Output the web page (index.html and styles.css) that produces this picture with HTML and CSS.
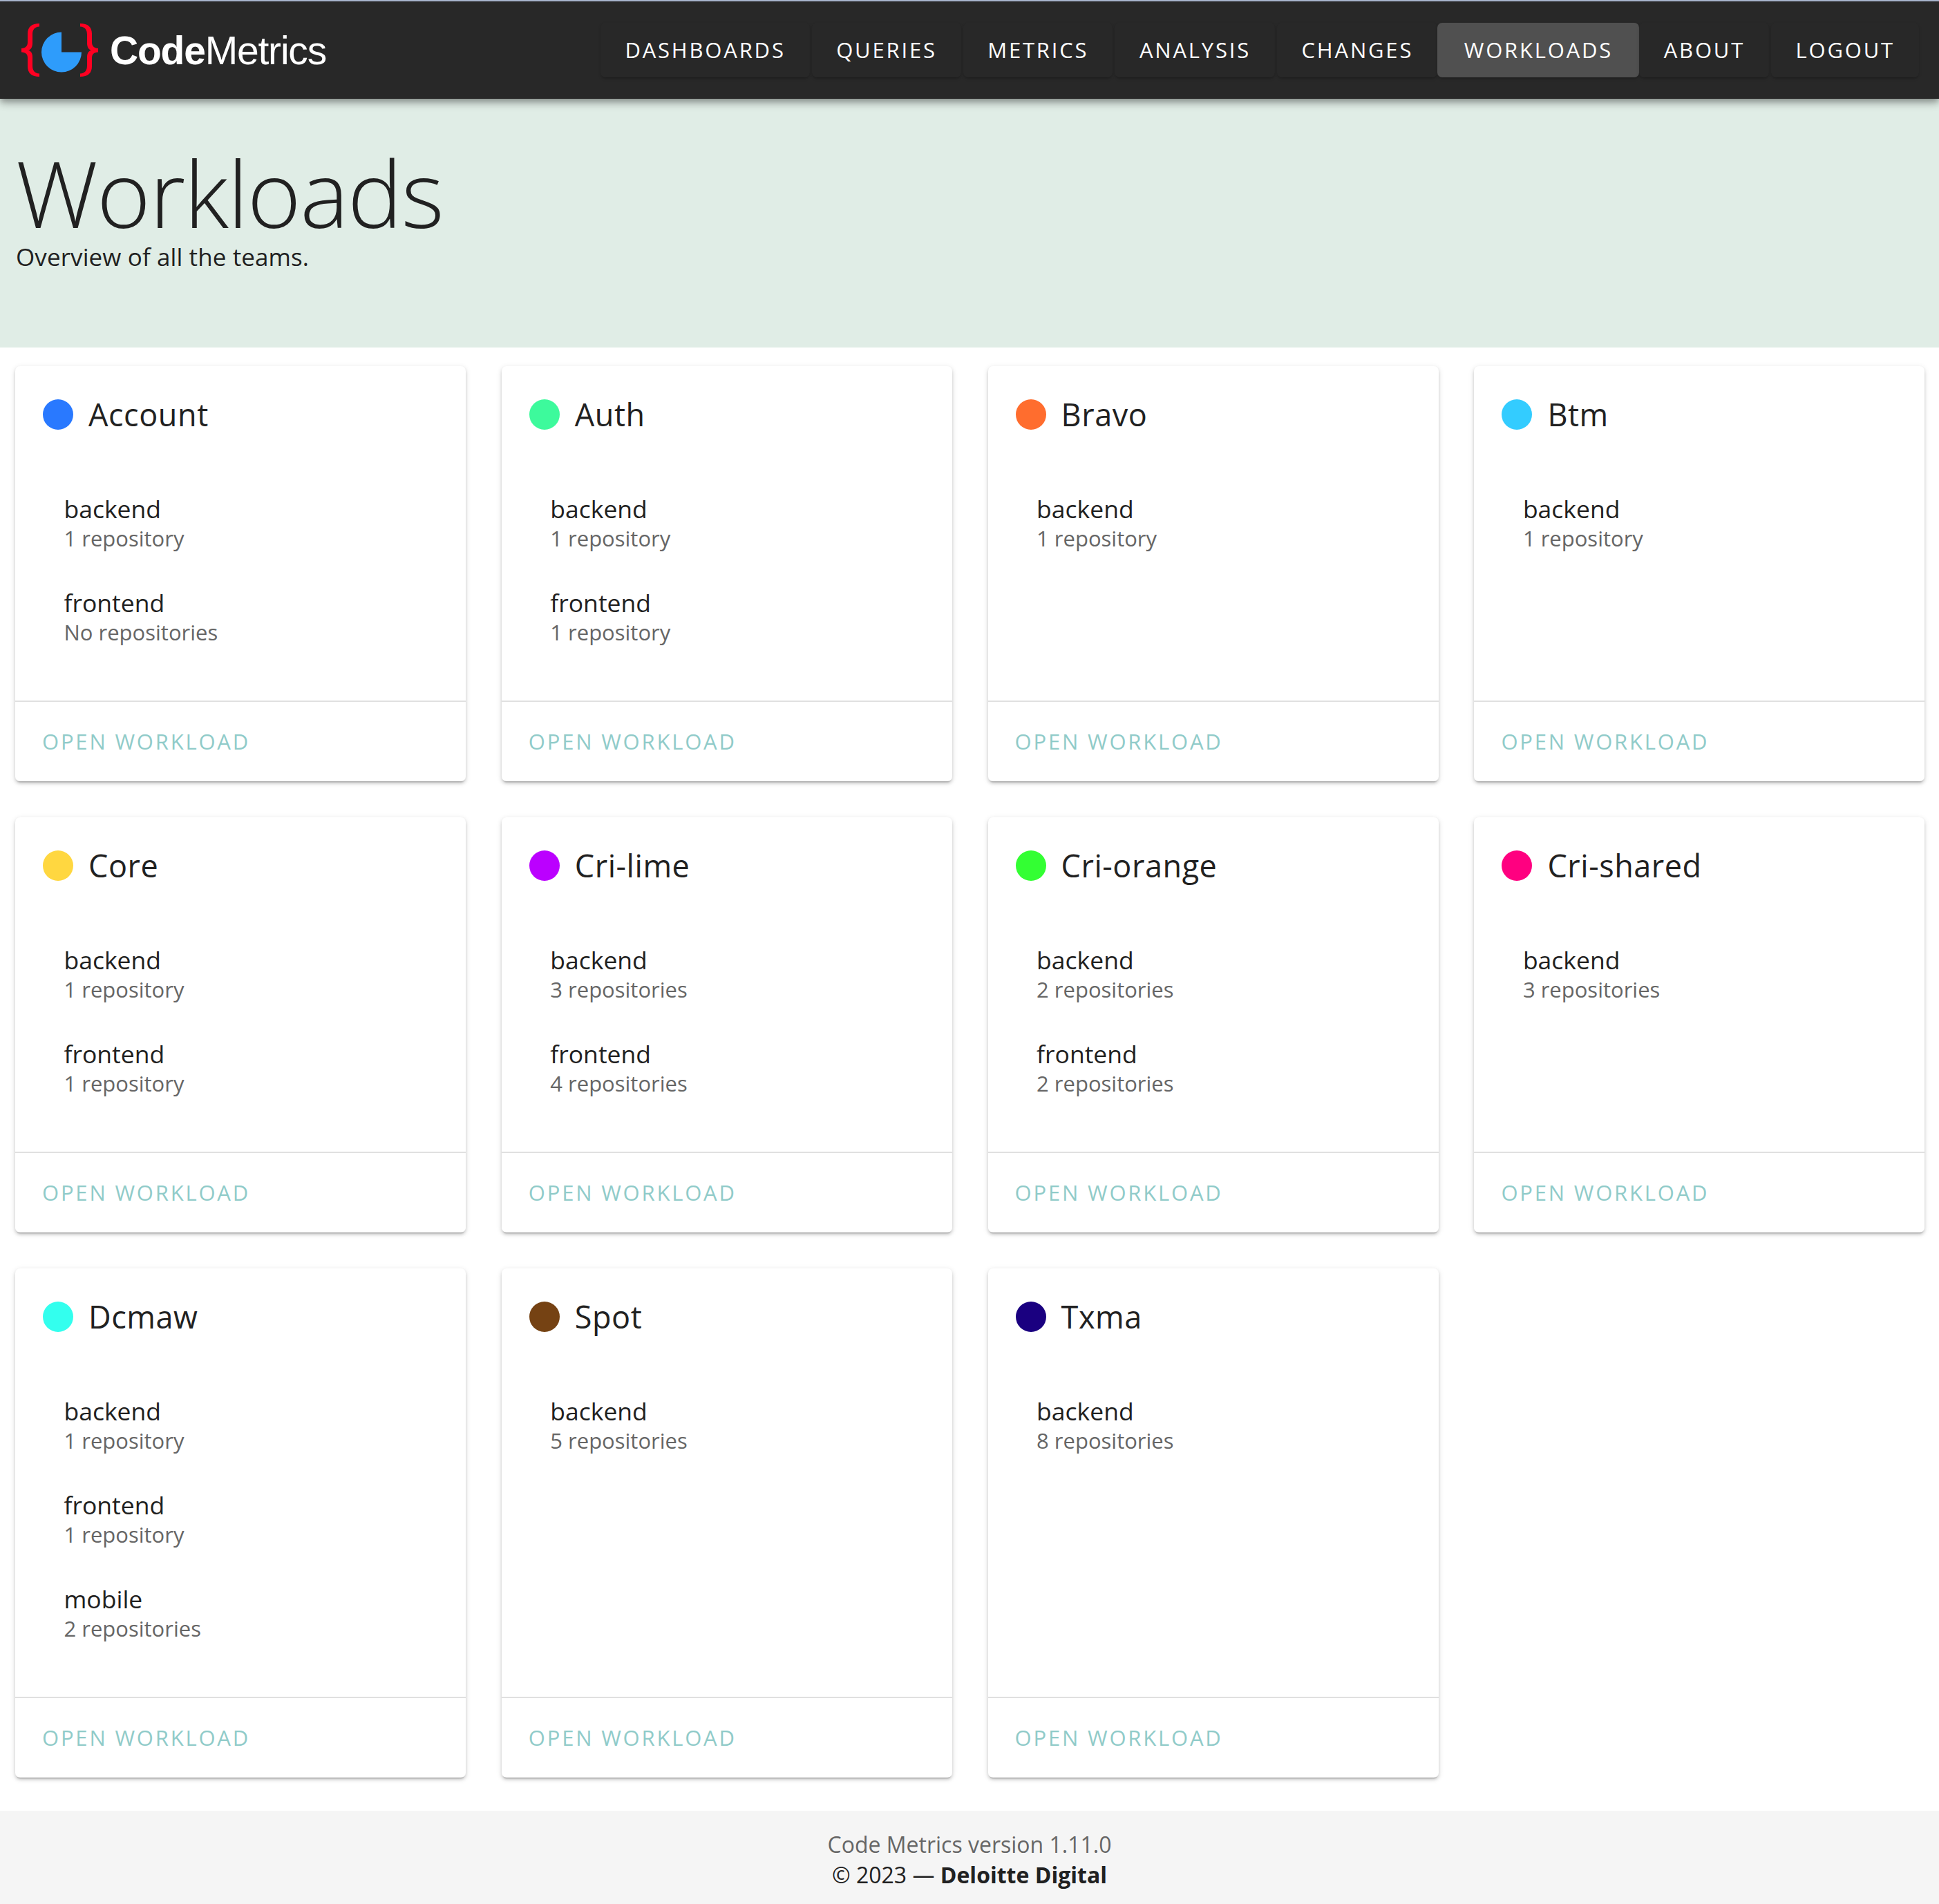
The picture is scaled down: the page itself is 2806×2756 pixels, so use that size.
FILE: index.html
```html
<!DOCTYPE html>
<html>
  <head>
    <meta charset="UTF-8">
    <link rel="stylesheet" href="styles.css">
    <title>Workloads</title>
  </head>
  <body>
    <header class="topbar">
      <a class="logo">
        <svg class="logo-mark" viewBox="31 33 111 77" width="111" height="77">
          <path fill="#ff0022" d="M57 33C46 33 40 38 40 48V60C40 66 37 68.5 31 69V74.5C37 75 40 77 40 83V95C40 105 46 110 57 110V105.5C50 105 47 101 47 94V82C47 76 45 73 41 71.8C45 70.5 47 67 47 61V49C47 42 50 38 57 37.5Z"/>
          <path fill="#ff0022" d="M116 33C127 33 133 38 133 48V60C133 66 136 68.5 142 69V74.5C136 75 133 77 133 83V95C133 105 127 110 116 110V105.5C123 105 126 101 126 94V82C126 76 128 73 132 71.8C128 70.5 126 67 126 61V49C126 42 123 38 116 37.5Z"/>
          <path fill="#2e9cfb" d="M89 74.5V45.5A29 29 0 1 0 118 74.5Z"/>
        </svg>
        <span class="logo-text"><b>Code</b>Metrics</span>
      </a>
      <nav class="nav">
        <a class="nav-btn">Dashboards</a>
        <a class="nav-btn">Queries</a>
        <a class="nav-btn">Metrics</a>
        <a class="nav-btn">Analysis</a>
        <a class="nav-btn">Changes</a>
        <a class="nav-btn active">Workloads</a>
        <a class="nav-btn">About</a>
        <a class="nav-btn">Logout</a>
      </nav>
    </header>

    <section class="hero">
      <h1>Workloads</h1>
      <p>Overview of all the teams.</p>
    </section>

    <main class="cards">
      <div class="card">
        <div class="card-head"><span class="dot dot-account"></span><h2>Account</h2></div>
        <ul class="groups">
          <li><span class="group-name">backend</span><span class="group-count">1 repository</span></li>
          <li><span class="group-name">frontend</span><span class="group-count">No repositories</span></li>
        </ul>
        <div class="card-actions"><a>Open workload</a></div>
      </div>
      <div class="card">
        <div class="card-head"><span class="dot dot-auth"></span><h2>Auth</h2></div>
        <ul class="groups">
          <li><span class="group-name">backend</span><span class="group-count">1 repository</span></li>
          <li><span class="group-name">frontend</span><span class="group-count">1 repository</span></li>
        </ul>
        <div class="card-actions"><a>Open workload</a></div>
      </div>
      <div class="card">
        <div class="card-head"><span class="dot dot-bravo"></span><h2>Bravo</h2></div>
        <ul class="groups">
          <li><span class="group-name">backend</span><span class="group-count">1 repository</span></li>
        </ul>
        <div class="card-actions"><a>Open workload</a></div>
      </div>
      <div class="card">
        <div class="card-head"><span class="dot dot-btm"></span><h2>Btm</h2></div>
        <ul class="groups">
          <li><span class="group-name">backend</span><span class="group-count">1 repository</span></li>
        </ul>
        <div class="card-actions"><a>Open workload</a></div>
      </div>
      <div class="card">
        <div class="card-head"><span class="dot dot-core"></span><h2>Core</h2></div>
        <ul class="groups">
          <li><span class="group-name">backend</span><span class="group-count">1 repository</span></li>
          <li><span class="group-name">frontend</span><span class="group-count">1 repository</span></li>
        </ul>
        <div class="card-actions"><a>Open workload</a></div>
      </div>
      <div class="card">
        <div class="card-head"><span class="dot dot-lime"></span><h2>Cri-lime</h2></div>
        <ul class="groups">
          <li><span class="group-name">backend</span><span class="group-count">3 repositories</span></li>
          <li><span class="group-name">frontend</span><span class="group-count">4 repositories</span></li>
        </ul>
        <div class="card-actions"><a>Open workload</a></div>
      </div>
      <div class="card">
        <div class="card-head"><span class="dot dot-orange"></span><h2>Cri-orange</h2></div>
        <ul class="groups">
          <li><span class="group-name">backend</span><span class="group-count">2 repositories</span></li>
          <li><span class="group-name">frontend</span><span class="group-count">2 repositories</span></li>
        </ul>
        <div class="card-actions"><a>Open workload</a></div>
      </div>
      <div class="card">
        <div class="card-head"><span class="dot dot-shared"></span><h2>Cri-shared</h2></div>
        <ul class="groups">
          <li><span class="group-name">backend</span><span class="group-count">3 repositories</span></li>
        </ul>
        <div class="card-actions"><a>Open workload</a></div>
      </div>
      <div class="card">
        <div class="card-head"><span class="dot dot-dcmaw"></span><h2>Dcmaw</h2></div>
        <ul class="groups">
          <li><span class="group-name">backend</span><span class="group-count">1 repository</span></li>
          <li><span class="group-name">frontend</span><span class="group-count">1 repository</span></li>
          <li><span class="group-name">mobile</span><span class="group-count">2 repositories</span></li>
        </ul>
        <div class="card-actions"><a>Open workload</a></div>
      </div>
      <div class="card">
        <div class="card-head"><span class="dot dot-spot"></span><h2>Spot</h2></div>
        <ul class="groups">
          <li><span class="group-name">backend</span><span class="group-count">5 repositories</span></li>
        </ul>
        <div class="card-actions"><a>Open workload</a></div>
      </div>
      <div class="card">
        <div class="card-head"><span class="dot dot-txma"></span><h2>Txma</h2></div>
        <ul class="groups">
          <li><span class="group-name">backend</span><span class="group-count">8 repositories</span></li>
        </ul>
        <div class="card-actions"><a>Open workload</a></div>
      </div>
    </main>

    <footer class="footer">
      <div class="version">Code Metrics version 1.11.0</div>
      <div class="copyright">© 2023 — <b>Deloitte Digital</b></div>
    </footer>
  </body>
</html>
```
FILE: styles.css
```css
body {
    margin: 0;
    background: #fff;
    color: #212121;
    font-family: "Open Sans", sans-serif;
}

.topbar {
    display: flex;
    align-items: center;
    height: 141px;
    padding: 0 29px 0 31px;
    background: #282828;
    border-top: 2px solid #a7b3cc;
    box-shadow: 0 4px 8px -1px rgba(0, 0, 0, .25), 0 8px 10px rgba(0, 0, 0, .14), 0 2px 18px rgba(0, 0, 0, .12);
    position: relative;
}

.logo {
    display: flex;
    align-items: center;
}

.logo-text {
    margin-left: 17px;
    font-family: "Liberation Sans", sans-serif;
    font-size: 57px;
    letter-spacing: -1.2px;
    color: #fff;
}

.nav {
    display: flex;
    gap: 3px;
    margin-left: auto;
}

.nav-btn {
    padding: 0 35px 0 35.5px;
    height: 79px;
    line-height: 78px;
    border-radius: 7px;
    background: #282828;
    box-shadow: 0 3px 2px -2px rgba(0, 0, 0, .2), 0 2px 4px rgba(0, 0, 0, .14);
    color: #fff;
    font-size: 31px;
    letter-spacing: 2.8px;
    text-transform: uppercase;
}

.nav-btn.active {
    margin: 0 -3px;
    padding: 0 38px 0 38.5px;
    background: #505050;
}

.hero {
    height: 291px;
    padding: 69px 0 0 23px;
    background: #e0ede6;
}

.hero h1 {
    margin: 0;
    font-size: 133px;
    font-weight: 300;
    line-height: 133px;
    letter-spacing: -1.6px;
}

.hero p {
    margin: 3px 0 0;
    font-size: 35px;
    line-height: 48px;
    letter-spacing: .1px;
}

.cards {
    display: grid;
    grid-template-columns: repeat(4, 652px);
    column-gap: 51.8px;
    row-gap: 52px;
    padding: 27px 0 48px 22px;
}

.card {
    display: flex;
    flex-direction: column;
    background: #fff;
    border-radius: 7px;
    box-shadow: 0 4px 2px -3px rgba(0, 0, 0, .3), 0 3px 4px rgba(0, 0, 0, .14), 0 2px 9px rgba(0, 0, 0, .12);
}

.card-head {
    display: flex;
    align-items: center;
    gap: 22px;
    padding: 40px 40px 0;
}

.card-head h2 {
    margin: 0;
    font-size: 45px;
    font-weight: 400;
    line-height: 60px;
    letter-spacing: .55px;
}

.dot {
    width: 44px;
    height: 44px;
    border-radius: 50%;
}

.dot-account { background: #2979ff; }
.dot-auth { background: #3dfa9c; }
.dot-bravo { background: #ff6d2e; }
.dot-btm { background: #33ccff; }
.dot-core { background: #ffd740; }
.dot-lime { background: #bb00ff; }
.dot-orange { background: #33ff33; }
.dot-shared { background: #ff0080; }
.dot-dcmaw { background: #33ffee; }
.dot-spot { background: #754213; }
.dot-txma { background: #1a0080; }

.groups {
    flex: 1;
    margin: 0;
    padding: 83px 40px 29px 70.5px;
    list-style: none;
}

.groups li {
    margin-bottom: 51px;
}

.group-name {
    display: block;
    font-size: 35.5px;
    line-height: 47px;
}

.group-count {
    display: block;
    font-size: 31px;
    line-height: 38px;
    color: #666;
}

.card-actions {
    height: 117px;
    padding: 37px 39px 0;
    border-top: 2px solid #e0e0e0;
    box-sizing: border-box;
    font-size: 31px;
    line-height: 40px;
    letter-spacing: 2.8px;
    text-transform: uppercase;
    color: #90cbc9;
}

.footer {
    height: 135px;
    padding-top: 27px;
    box-sizing: border-box;
    background: #f5f5f5;
    text-align: center;
    font-size: 32px;
    line-height: 44px;
}

.version {
    color: #666;
}
```
